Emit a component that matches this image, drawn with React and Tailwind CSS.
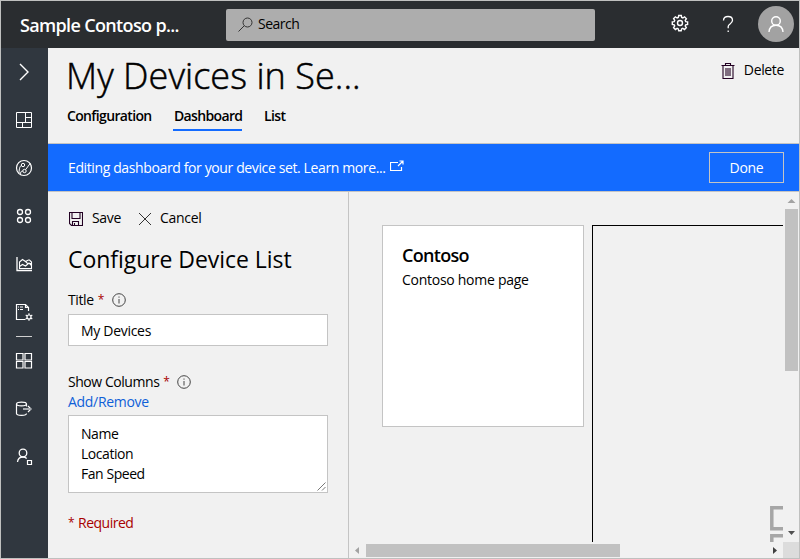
const navIcon = 'mr-px h-6 w-6 fill-none stroke-white';

function Nav({ children }) {
  return (
    <div className="flex h-12 items-center justify-center">
      <svg viewBox="0 0 24 24" className={navIcon} strokeWidth="1">{children}</svg>
    </div>
  );
}

function Sidebar() {
  return (
    <nav className="flex w-[47px] shrink-0 flex-col bg-[#30373f]">
      <Nav><path d="M8 4l8 8-8 8" strokeWidth="1.4" /></Nav>
      <Nav><path d="M4.500 4.500h15v15h-15zM13.500 4.500v10M4.500 14.500h15M13.500 9.500h6M10.500 14.500v5" /></Nav>
      <Nav>
        <circle cx="12" cy="12" r="7.500" strokeWidth="1.200" />
        <circle cx="11" cy="9" r="1.700" />
        <circle cx="12.500" cy="15" r="1.700" />
        <path d="M7 17c.2-4.500.8-7 2.500-7.500M13.700 13.500L18.500 7M10.800 15c-2.200 0-2.200 1.500-2.200 3.500" />
      </Nav>
      <Nav>
        <circle cx="8" cy="8" r="2.500" strokeWidth="1.300" />
        <circle cx="16" cy="8" r="2.500" strokeWidth="1.300" />
        <circle cx="8" cy="16" r="2.500" strokeWidth="1.300" />
        <circle cx="16" cy="16" r="2.500" strokeWidth="1.300" />
      </Nav>
      <Nav>
        <path d="M5 5v13.500h15" strokeWidth="1.300" />
        <path d="M7.500 16.500V10l3-2.500 3 2 3-1.500h1l2 2v6.500zM7.500 14.500l3-2 3 1.500 3.500-3 2.500 2.500M13.500 9.500l2 2h4" strokeWidth="1.100" />
      </Nav>
      <Nav>
        <path d="M13.500 19.500h-9v-15h9l3 3v3.500M13.500 4.500v3h3" strokeWidth="1.200" />
        <path d="M6 7h1M8 7h3M6 9.500h1M8 9.500h3" />
        <circle cx="17" cy="17" r="2" strokeWidth="1.200" />
        <path d="M17 13.200v1.800M17 19v1.800M13.700 15.100l1.500.9M18.800 18l1.500.9M13.700 18.900l1.500-.9M18.800 16l1.500-.9" strokeWidth="1.200" />
      </Nav>
      <div className="ml-[15px] h-px w-4 bg-[#d0d0d0]" />
      <Nav><path d="M4.500 4.500h6.500v6.500h-6.500zM13 4.500h6.500v6.500h-6.500zM4.500 12.500h6.500v6.500h-6.500zM13 12.500h6.500v6.500h-6.500z" strokeWidth="1.200" /></Nav>
      <Nav>
        <path d="M4.500 7c0-2.500 10-2.500 10 0s-10 2.500-10 0v9.500c0 2.500 10 2.500 10 0M14.500 7v2.500M16 9l3 3-3 3" strokeWidth="1.200" />
        <path d="M11 12h8" className="stroke-[#a7abb0]" strokeWidth="2" />
      </Nav>
      <Nav>
        <circle cx="11" cy="8" r="3.800" strokeWidth="1.300" />
        <path d="M5.500 17c.3-3 2.300-5 5.500-5 1.500 0 2.800.5 3.700 1.500" strokeWidth="1.300" />
        <path d="M15.500 15.500h4v4h-4z" strokeWidth="1.200" />
      </Nav>
    </nav>
  );
}

function Header() {
  return (
    <header className="flex h-[47px] shrink-0 items-center bg-[#2a2d30] text-white">
      <div className="w-[225px] pl-[19px] text-[18px] font-semibold leading-6 tracking-[-0.65px]">Sample Contoso p...</div>
      <div className="flex h-8 w-[369px] items-center rounded-xs bg-[#adadad] pl-3 text-black">
        <svg viewBox="0 0 16 16" className="h-4 w-4 fill-none stroke-[#333]">
          <circle cx="9.500" cy="5.500" r="4.500" /><path d="M6.300 8.700L.5 14.500" />
        </svg>
        <span className="-mt-0.5 ml-1 text-[14px] tracking-[-0.5px]">Search</span>
      </div>
      <svg viewBox="0 0 18 18" className="-mt-1 ml-[76px] h-[18px] w-[18px] fill-none stroke-white" strokeWidth="1.400">
        <path d="M7.700 1.500h2.600l.4 2 1.200.5 1.700-1.200 1.800 1.900-1.200 1.700.5 1.200 1.900.3v2.500l-1.900.4-.5 1.200 1.100 1.700-1.800 1.800-1.700-1.100-1.200.5-.4 1.900H7.700l-.4-1.900-1.200-.5-1.700 1.100-1.800-1.800 1.100-1.700-.5-1.200-1.900-.4V7.900l1.900-.3.500-1.200-1.100-1.700 1.800-1.900L6.100 4l1.200-.5z" />
        <circle cx="9" cy="9" r="2.500" />
      </svg>
      <svg viewBox="0 0 12 18" className="-mt-0.5 ml-[33px] h-[18px] w-3 fill-none stroke-white" strokeWidth="1.300">
        <path d="M1.500 5.500C1.500 2.500 3.500 1.500 6 1.500s4.500 1.300 4.500 3.800c0 3.500-4.300 3.700-4.300 6.200v1.700M6.200 15.500v1.500" />
      </svg>
      <div className="-mt-0.5 ml-6 flex h-9 w-9 items-center justify-center rounded-full bg-[#a2a2a2]">
        <svg viewBox="0 0 18 18" className="h-[18px] w-[18px] fill-none stroke-white" strokeWidth="1.400">
          <circle cx="9" cy="6" r="4.300" /><path d="M2 17c.3-4 3-6.700 7-6.700s6.700 2.700 7 6.700" />
        </svg>
      </div>
    </header>
  );
}

function PageHead() {
  return (
    <div className="flex h-24 shrink-0 justify-between border-b border-[#c4c4c4]">
      <div className="pl-[18px]">
        <h1 className="h-[54px] text-[36px] font-light leading-[55px] tracking-[0.05px] [-webkit-text-stroke:0.5px_black]">My Devices in Se...</h1>
        <div className="ml-px flex gap-[22px] text-[14px] font-semibold leading-[28px] tracking-[-0.65px]">
          <span className="w-[84px]">Configuration</span>
          <span className="h-[29px] w-[69px] border-b-2 border-[#136bff] pl-px">Dashboard</span>
          <span>List</span>
        </div>
      </div>
      <div className="flex h-11 items-center pr-[15px] text-[14px]">
        <svg viewBox="0 0 14 16" className="mt-0.5 mr-[9px] h-4 w-3.5 fill-none stroke-[#220022]">
          <path d="M.5 2.500h13M4.500 2.500v-2h5v2M2 2.500v13h10v-13M5 5v8M7 5v8M9 5v8" strokeWidth="1.100" />
        </svg>
        <span className="-mt-px tracking-[-0.35px]">Delete</span>
      </div>
    </div>
  );
}

function Info() {
  return (
    <svg viewBox="0 0 14 14" className="ml-2 h-3.5 w-3.5 fill-none stroke-[#444]">
      <circle cx="7" cy="7" r="6.300" /><path d="M7 6v4.500M7 3.500v1.200" />
    </svg>
  );
}

function Star() {
  return <span className="ml-1 w-[6px] text-[12px] text-[#a80000]">*</span>;
}

function Panel() {
  return (
    <section className="w-[301px] shrink-0 border-r border-[#c4c4c4] pl-5 text-[14px] leading-5 tracking-[-0.3px]">
      <div className="flex h-[52px] items-center">
        <svg viewBox="0 0 14 14" className="mt-px mr-[9px] ml-px h-3.5 w-3.5 fill-none stroke-[#220022]">
          <path d="M.5.500h13v13H2.500l-2-2zM3 .5v6h8v-6M3.500 13.500v-4h6v4M5.500 11v2.500" strokeWidth="1.100" />
        </svg>
        <span className="w-[46px] tracking-[-0.35px]">Save</span>
        <svg viewBox="0 0 14 14" className="mt-px mr-2 h-3.5 w-3.5 fill-none stroke-[#333]"><path d="M1 1l12 12M13 1L1 13" /></svg>
        <span>Cancel</span>
      </div>
      <h2 className="h-[46px] text-[23px] font-normal leading-[30px] tracking-[-0.05px]">Configure Device List</h2>
      <div className="flex h-5 items-center tracking-[-0.4px]">Title<Star /><Info /></div>
      <div className="mt-[4px] h-8 w-[260px] border border-[#c4c4c4] bg-white pl-3 leading-8">My Devices</div>
      <div className="mt-[26px] flex h-5 items-center tracking-[-0.45px]">Show Columns<Star /><Info /></div>
      <div className="text-[#0f5fd8]">Add/Remove</div>
      <div className="mt-[3px] flex h-[78px] w-[260px] items-end justify-between border border-[#c4c4c4] bg-white pb-2 pl-3">
        <div className="tracking-[-0.45px]">Name<br />Location<br />Fan Speed</div>
        <svg viewBox="0 0 9 9" className="-mb-[7px] mr-px h-[9px] w-[9px] fill-none stroke-[#555]"><path d="M.5 8.500l8-8M5 8.500L8.500 5" strokeWidth=".8" /></svg>
      </div>
      <div className="mt-5 flex gap-1 tracking-[-0.5px] text-[#a80000]"><span className="w-[6px] text-[12px]">*</span>Required</div>
    </section>
  );
}

function Canvas() {
  return (
    <section className="flex min-w-0 flex-1 flex-col">
      <div className="flex min-h-0 flex-1">
        <div className="flex min-w-0 flex-1 gap-2 overflow-hidden pl-[33px] pt-[33px]">
          <div className="h-[202px] w-[202px] shrink-0 border border-[#c4c4c4] bg-white pl-[19px] pt-[17px]">
            <div className="text-[18px] font-semibold leading-6 tracking-[-0.7px]">Contoso</div>
            <div className="mt-[3px] text-[14px] leading-5 tracking-[-0.27px]">Contoso home page</div>
          </div>
          <div className="flex flex-1 items-end justify-end border-l border-t border-black">
            <svg viewBox="0 0 13 36" className="h-9 w-[13px] fill-none stroke-[#a6a6a6]" strokeWidth="3.500">
              <path d="M13 1.800H1.800v21H13M13 29.800H1.800v7" />
            </svg>
          </div>
        </div>
        <div className="flex w-4 shrink-0 flex-col items-center">
          <svg viewBox="0 0 16 17" className="h-[17px] w-4 fill-[#a3a3a3]"><path d="M4.500 11L8.500 7l4 4z" /></svg>
          <div className="ml-[1px] h-[162px] w-[13px] bg-[#c1c1c1]" />
          <svg viewBox="0 0 16 17" className="mt-auto h-[17px] w-4 fill-[#505050]"><path d="M5 6l3.500 4L12 6z" /></svg>
        </div>
      </div>
      <div className="flex h-4 shrink-0 items-center">
        <svg viewBox="0 0 17 16" className="h-4 w-[17px] fill-[#a3a3a3]"><path d="M10 5v7L6 8.500z" /></svg>
        <div className="mt-px h-[13px] w-[254px] bg-[#c1c1c1]" />
        <svg viewBox="0 0 17 16" className="ml-auto h-4 w-[17px] fill-[#404040]"><path d="M7 5v7l4-3.500z" /></svg>
        <div className="h-4 w-4 bg-[#dcdcdc]" />
      </div>
    </section>
  );
}

export default function App() {
  return (
    <div className="flex h-[559px] w-[800px] flex-col overflow-hidden border border-[#bfc0bf] bg-[#f1f1f1] font-['Open_Sans','Noto_Sans',sans-serif] text-black">
      <Header />
      <div className="flex min-h-0 flex-1">
        <Sidebar />
        <main className="flex min-w-0 flex-1 flex-col">
          <PageHead />
          <div className="flex h-12 shrink-0 items-center justify-between border-b border-[#c4c4c4] bg-[#136bff] pl-5 pr-[15px] text-[14px] text-white">
            <div className="flex items-center">
              <span className="tracking-[-0.38px]">Editing dashboard for your device set. Learn more...</span>
              <svg viewBox="0 0 14 12" className="-mt-1 ml-1 h-3 w-3.5 fill-none stroke-white" strokeWidth="1.200"><path d="M8 2.500H.5v8h11V7M8 6l5-5M9.500 1h3.500v3.500" /></svg>
            </div>
            <div className="flex h-[31px] w-[75px] items-center justify-center border border-[#c4c4c4] tracking-[-0.3px]">Done</div>
          </div>
          <div className="flex min-h-0 flex-1">
            <Panel />
            <Canvas />
          </div>
        </main>
      </div>
    </div>
  );
}
